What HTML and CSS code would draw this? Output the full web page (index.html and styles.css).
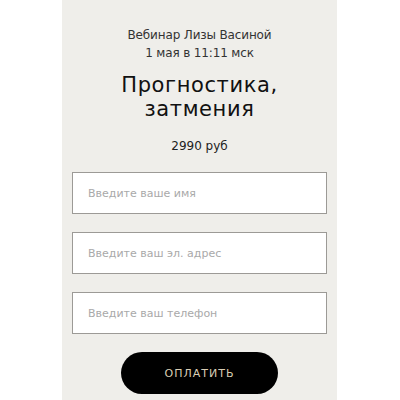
FILE: index.html
```html
<!DOCTYPE html>
<html lang="ru">
<head>
<meta charset="utf-8">
<link rel="stylesheet" href="styles.css">
</head>
<body>
<div class="panel">
  <div class="meta">
    <div>Вебинар Лизы Васиной</div>
    <div>1 мая в 11:11 мск</div>
  </div>
  <h1 class="title">Прогностика,<br>затмения</h1>
  <div class="price">2990 руб</div>
  <form class="form">
    <input class="field" type="text" placeholder="Введите ваше имя">
    <input class="field" type="text" placeholder="Введите ваш эл. адрес">
    <input class="field" type="text" placeholder="Введите ваш телефон">
    <button class="pay" type="button">ОПЛАТИТЬ</button>
  </form>
</div>
</body>
</html>
```
FILE: styles.css
```css
html, body {
  margin: 0;
  padding: 0;
  background: #ffffff;
}
body {
  font-family: "DejaVu Sans", sans-serif;
  color: #222;
}
.panel {
  width: 275px;
  height: 400px;
  margin-left: 62px;
  background: #efeeea;
  box-sizing: border-box;
  padding: 26px 10px 0;
  display: flex;
  flex-direction: column;
  align-items: center;
  overflow: hidden;
}
.meta {
  font-size: 12px;
  line-height: 18px;
  text-align: center;
  color: #333;
  letter-spacing: -0.15px;
}
.title {
  margin: 11px 0 0;
  font-size: 21px;
  font-weight: normal;
  line-height: 24px;
  text-align: center;
  letter-spacing: 0.6px;
  color: #111;
}
.price {
  margin-top: 17px;
  font-size: 12px;
  line-height: 16px;
  color: #222;
}
.form {
  margin-top: 18px;
  width: 100%;
  display: flex;
  flex-direction: column;
  align-items: center;
  gap: 18px;
}
.field {
  width: 100%;
  height: 42px;
  box-sizing: border-box;
  margin: 0;
  border: 1px solid #9c9a96;
  background: #fff;
  padding: 0 15px;
  font-family: "DejaVu Sans", sans-serif;
  font-size: 11px;
  outline: none;
}
.field::placeholder {
  color: #a9a9a9;
}
.pay {
  margin-top: 0;
  width: 157px;
  height: 42px;
  border: none;
  border-radius: 21px;
  background: #000;
  color: #d9cdb4;
  font-family: "DejaVu Sans", sans-serif;
  font-size: 11px;
  letter-spacing: 1px;
}
```
